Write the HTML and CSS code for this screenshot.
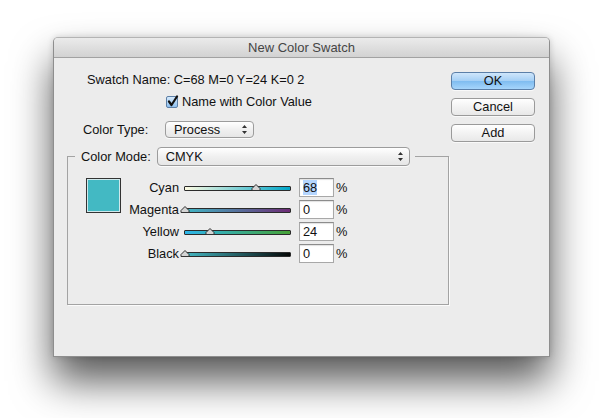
FILE: index.html
```html
<!DOCTYPE html>
<html>
<head>
<meta charset="utf-8">
<link rel="stylesheet" href="styles.css">
</head>
<body>
<div class="window">
  <div class="titlebar">New Color Swatch</div>
  <div class="content">
    <div class="main">
      <div class="swatch-name">Swatch Name: C=68 M=0 Y=24 K=0 2</div>
      <div class="check-row">
        <span class="checkbox">
          <svg width="13" height="13" viewBox="0 0 13 13"><path d="M3 6.5 L5.5 10 L11 1.5" fill="none" stroke="#111" stroke-width="2.2" stroke-linejoin="round" stroke-linecap="round"/></svg>
        </span>
        <span>Name with Color Value</span>
      </div>
      <div class="type-row">
        <span class="type-label">Color Type:</span>
        <div class="popup popup-type"><span>Process</span>
          <svg class="arrows" width="5" height="9" viewBox="0 0 5 9"><path d="M2.5 0 L5 3 L0 3Z M2.5 9 L5 6 L0 6Z" fill="#333"/></svg>
        </div>
      </div>
      <fieldset class="group">
        <legend class="legend">
          <span class="mode-label">Color Mode:</span>
          <div class="popup popup-mode"><span>CMYK</span>
            <svg class="arrows" width="5" height="9" viewBox="0 0 5 9"><path d="M2.5 0 L5 3 L0 3Z M2.5 9 L5 6 L0 6Z" fill="#333"/></svg>
          </div>
        </legend>
        <div class="group-body">
          <div class="swatch"></div>
          <div class="sliders">
            <div class="slider-row">
              <span class="s-label">Cyan</span>
              <div class="track track-c"><span class="thumb" style="left:68%"></span></div>
              <div class="field"><span class="sel">68</span></div>
              <span class="pct">%</span>
            </div>
            <div class="slider-row">
              <span class="s-label">Magenta</span>
              <div class="track track-m"><span class="thumb" style="left:0%"></span></div>
              <div class="field">0</div>
              <span class="pct">%</span>
            </div>
            <div class="slider-row">
              <span class="s-label">Yellow</span>
              <div class="track track-y"><span class="thumb" style="left:24%"></span></div>
              <div class="field">24</div>
              <span class="pct">%</span>
            </div>
            <div class="slider-row">
              <span class="s-label">Black</span>
              <div class="track track-k"><span class="thumb" style="left:0%"></span></div>
              <div class="field">0</div>
              <span class="pct">%</span>
            </div>
          </div>
        </div>
      </fieldset>
    </div>
    <div class="buttons">
      <div class="btn btn-default">OK</div>
      <div class="btn">Cancel</div>
      <div class="btn">Add</div>
    </div>
  </div>
</div>
</body>
</html>
```
FILE: styles.css
```css
* { box-sizing: border-box; }
html { margin: 0; background: #fff; }
body {
  margin: 0;
  padding: 37px 0 0 53px;
  min-height: 418px;
  background: #fff;
  font-family: "Liberation Sans", Arial, sans-serif;
  font-size: 12.8px;
  color: #111;
}
.window {
  width: 497px;
  height: 320px;
  background: #ececec;
  border: 1px solid #8e8e8e;
  border-top-color: #b4b4b4;
  border-radius: 5px 5px 0 0;
  box-shadow: 0 24px 40px rgba(0, 0, 0, 0.66), 0 0 6px rgba(0,0,0,0.15);
  display: flex;
  flex-direction: column;
}
.titlebar {
  height: 20px;
  flex: none;
  background: linear-gradient(#ebebeb, #d2d2d2);
  border-bottom: 1px solid #a2a2a2;
  border-radius: 4px 4px 0 0;
  text-align: center;
  font-size: 13px;
  line-height: 19px;
  color: #454545;
}
.content { display: flex; flex: 1; }
.main { flex: 1; display: flex; flex-direction: column; align-items: flex-start; }
.swatch-name { margin: 14px 0 0 33px; line-height: 16px; }
.check-row {
  margin: 6px 0 0 112px;
  display: flex;
  align-items: center;
  gap: 4px;
  line-height: 16px;
}
.checkbox {
  width: 12px; height: 12px;
  border: 1px solid #5d7fa6;
  border-radius: 2px;
  background: linear-gradient(#d6eafc, #8ec0ef);
  position: relative;
}
.checkbox svg { position: absolute; left: -1px; top: -2px; }
.type-row { margin: 11px 0 0 29px; display: flex; align-items: center; }
.type-label { width: 82px; }
.popup {
  height: 17px;
  border: 1px solid #9c9c9c;
  border-radius: 4px;
  background: linear-gradient(#ffffff, #f0f0f0 50%, #e6e6e6);
  box-shadow: 0 1px 0 rgba(255,255,255,0.8);
  display: flex;
  align-items: center;
  justify-content: space-between;
  padding: 0 6px 0 8px;
  line-height: 15px;
}
.popup-type { width: 89px; }
.popup-mode { width: 253px; height: 19px; padding-left: 8px; }
.group {
  margin: 9px 0 0 13px;
  padding: 0;
  width: 382px;
  height: 158px;
  border: 1px solid #a3a3a3;
  box-shadow: 1px 1px 0 #fbfbfb;
  min-inline-size: 0;
}
.legend {
  margin-left: 7px;
  padding: 0 5px 0 6px;
  display: flex;
  align-items: center;
  gap: 6px;
}
.group-body { display: flex; padding: 12px 0 0 18px; }
.swatch {
  width: 35px; height: 35px;
  background: #43b9c3;
  border: 1px solid #333;
  box-shadow: inset 0 0 0 1px #cfe9ec;
}
.sliders { display: flex; flex-direction: column; }
.slider-row { display: grid; grid-template-columns: 57px 107px 35px auto; column-gap: 6px; align-items: center; height: 22px; align-content: start; }
.slider-row .field { margin-left: 2px; }
.s-label { text-align: right; line-height: 19px; margin-right: -1px; }
.track {
  position: relative;
  height: 5px;
  margin-top: 2px;
  border: 1px solid #2b2b2b;
  border-radius: 1px;
}
.track-c { background: linear-gradient(to right, #fdfbe2, #00a6c9); }
.track-m { background: linear-gradient(to right, #40b7c5, #6d2b75); }
.track-y { background: linear-gradient(to right, #2db5ea, #46a236); }
.track-k { background: linear-gradient(to right, #44b8c3, #040606); }
.thumb {
  position: absolute;
  top: -3px;
  width: 10px; height: 7px;
  margin-left: -5px;
  background: no-repeat center/10px 7px url("data:image/svg+xml,%3Csvg xmlns='http://www.w3.org/2000/svg' width='10' height='7' viewBox='0 0 10 7'%3E%3Cpath d='M5 0.5 L9 4.5 L9 6.5 L1 6.5 L1 4.5 Z' fill='%23d4d4d4' stroke='%23333' stroke-width='1'/%3E%3C/svg%3E");
}
.field {
  width: 35px; height: 19px;
  background: #fff;
  border: 1px solid #a8a8a8;
  border-top-color: #8c8c8c;
  box-shadow: inset 0 1px 1px rgba(0,0,0,0.12);
  padding: 0 0 0 3px;
  line-height: 17px;
}
.sel { background: #b4d5fe; }
.pct { margin-left: -2px; line-height: 19px; }
.buttons { width: 84px; margin: 14px 14px 0 0; display: flex; flex-direction: column; gap: 8px; }
.btn {
  height: 18px;
  border: 1px solid #9a9a9a;
  border-radius: 4px;
  background: linear-gradient(#ffffff, #f3f3f3 50%, #e8e8e8);
  text-align: center;
  line-height: 16px;
  box-shadow: 0 1px 0 rgba(255,255,255,0.7);
}
.btn-default {
  border-color: #5b7fa8;
  background: linear-gradient(#cfe6fb, #a4cff5 50%, #7fbcf0 51%, #a6d5fb);
}
```
